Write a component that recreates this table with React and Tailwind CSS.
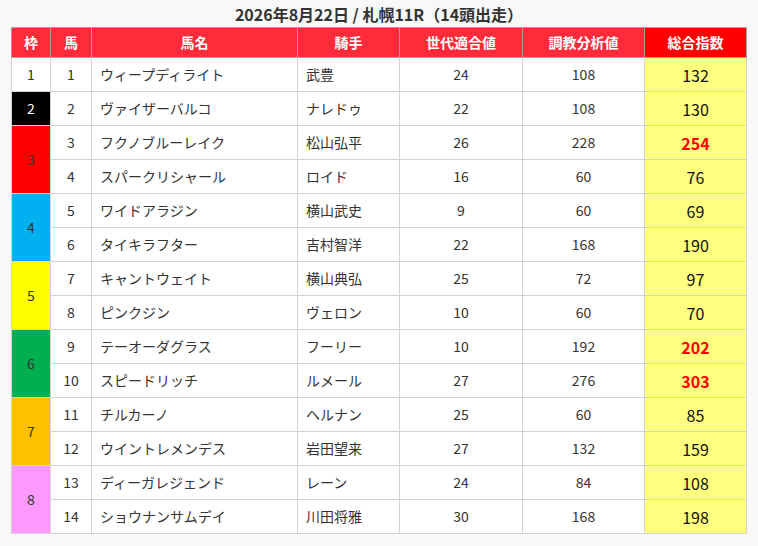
import React from "react";

const frameStyles = {
  1: "bg-white text-[#333]",
  2: "bg-black text-white",
  3: "bg-[#ff0000] text-[#333]",
  4: "bg-[#00b0f0] text-[#333]",
  5: "bg-[#ffff00] text-[#333]",
  6: "bg-[#00b050] text-[#333]",
  7: "bg-[#ffc000] text-[#333]",
  8: "bg-[#ff99ff] text-[#333]",
};

const rows = [
  { f: 1, span: 1, n: 1, name: "ウィープディライト", j: "武豊", a: 24, b: 108, t: 132 },
  { f: 2, span: 1, n: 2, name: "ヴァイザーバルコ", j: "ナレドゥ", a: 22, b: 108, t: 130 },
  { f: 3, span: 2, n: 3, name: "フクノブルーレイク", j: "松山弘平", a: 26, b: 228, t: 254, hot: true },
  { f: 3, span: 0, n: 4, name: "スパークリシャール", j: "ロイド", a: 16, b: 60, t: 76 },
  { f: 4, span: 2, n: 5, name: "ワイドアラジン", j: "横山武史", a: 9, b: 60, t: 69 },
  { f: 4, span: 0, n: 6, name: "タイキラフター", j: "吉村智洋", a: 22, b: 168, t: 190 },
  { f: 5, span: 2, n: 7, name: "キャントウェイト", j: "横山典弘", a: 25, b: 72, t: 97 },
  { f: 5, span: 0, n: 8, name: "ピンクジン", j: "ヴェロン", a: 10, b: 60, t: 70 },
  { f: 6, span: 2, n: 9, name: "テーオーダグラス", j: "フーリー", a: 10, b: 192, t: 202, hot: true },
  { f: 6, span: 0, n: 10, name: "スピードリッチ", j: "ルメール", a: 27, b: 276, t: 303, hot: true },
  { f: 7, span: 2, n: 11, name: "チルカーノ", j: "ヘルナン", a: 25, b: 60, t: 85 },
  { f: 7, span: 0, n: 12, name: "ウイントレメンデス", j: "岩田望来", a: 27, b: 132, t: 159 },
  { f: 8, span: 2, n: 13, name: "ディーガレジェンド", j: "レーン", a: 24, b: 84, t: 108 },
  { f: 8, span: 0, n: 14, name: "ショウナンサムデイ", j: "川田将雅", a: 30, b: 168, t: 198 },
];

const font = { fontFamily: '"Noto Sans CJK JP", "Noto Sans", sans-serif' };

export default function App() {
  return (
    <div className="w-[758px] h-[546px] bg-[#f8f8f8]" style={font}>
      <div className="h-[27px] flex items-center justify-center text-[16px] font-bold text-[#333] leading-none">
        2026年8月22日 / 札幌11R（14頭出走）
      </div>
      <table className="ml-[11px] w-[735px] table-fixed border-collapse text-[14px] text-[#333]">
        <colgroup>
          <col className="w-[39px]" />
          <col className="w-[41px]" />
          <col className="w-[206px]" />
          <col className="w-[102px]" />
          <col className="w-[123px]" />
          <col className="w-[122px]" />
          <col className="w-[102px]" />
        </colgroup>
        <thead>
          <tr className="h-[30px] text-white font-bold text-[14px]">
            <th className="bg-[#ff2b3a] border border-[#a8a0a0] font-bold">枠</th>
            <th className="bg-[#ff2b3a] border border-[#a8a0a0] font-bold">馬</th>
            <th className="bg-[#ff2b3a] border border-[#a8a0a0] font-bold">馬名</th>
            <th className="bg-[#ff2b3a] border border-[#a8a0a0] font-bold">騎手</th>
            <th className="bg-[#ff2b3a] border border-[#a8a0a0] font-bold">世代適合値</th>
            <th className="bg-[#ff2b3a] border border-[#a8a0a0] font-bold">調教分析値</th>
            <th className="bg-[#ff0000] border border-[#a8a0a0] font-bold">総合指数</th>
          </tr>
        </thead>
        <tbody>
          {rows.map((r) => (
            <tr key={r.n} className="h-[34px]">
              {r.span > 0 && (
                <td
                  rowSpan={r.span}
                  className={`border border-[#d3d3d3] text-center ${frameStyles[r.f]}`}
                >
                  {r.f}
                </td>
              )}
              <td className="border border-[#d3d3d3] bg-white text-center">{r.n}</td>
              <td className="border border-[#d3d3d3] bg-white pl-[8px] whitespace-nowrap">{r.name}</td>
              <td className="border border-[#d3d3d3] bg-white pl-[8px] whitespace-nowrap">{r.j}</td>
              <td className="border border-[#d3d3d3] bg-white text-center">{r.a}</td>
              <td className="border border-[#d3d3d3] bg-white text-center">{r.b}</td>
              <td
                className={`border border-[#d3d3d3] bg-[#ffff80] text-center text-[16px] ${
                  r.hot ? "text-[#ff0000] font-bold" : "text-[#111]"
                }`}
              >
                {r.t}
              </td>
            </tr>
          ))}
        </tbody>
      </table>
    </div>
  );
}
